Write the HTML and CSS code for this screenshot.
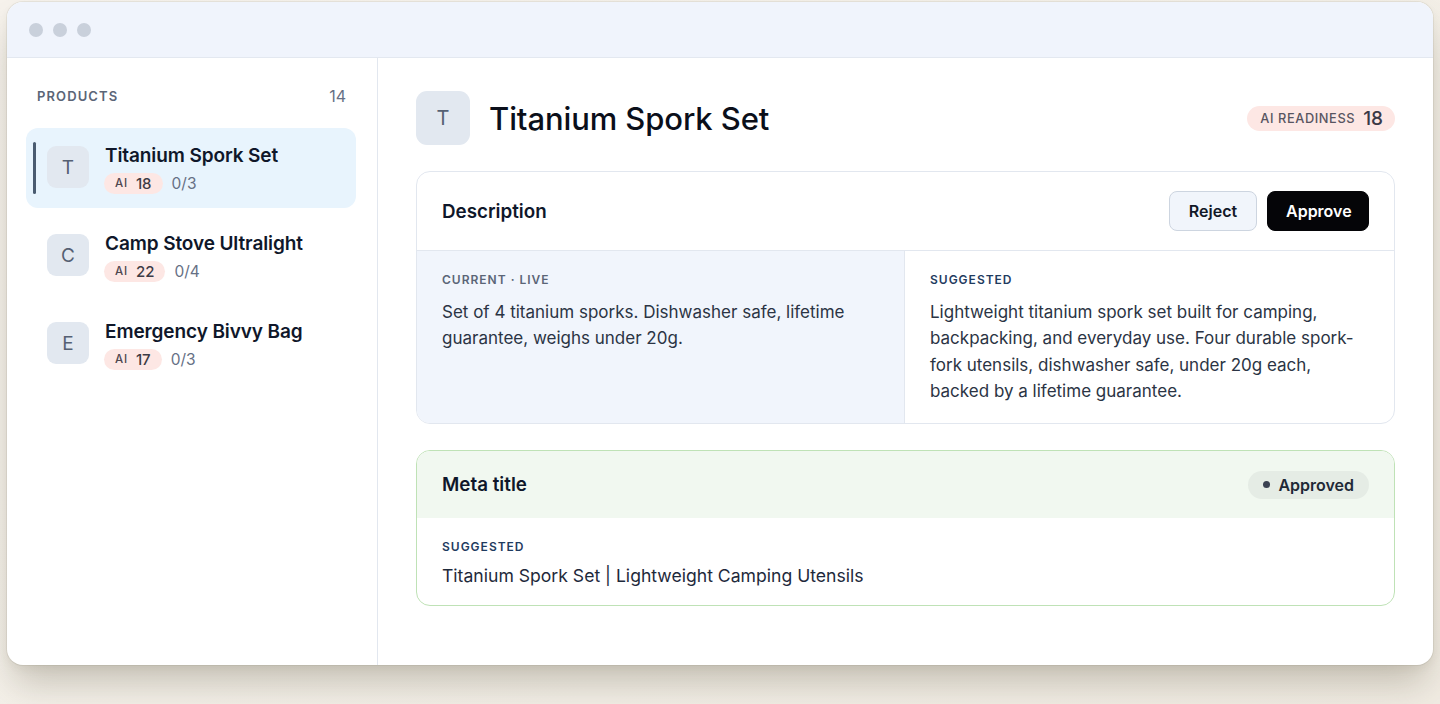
FILE: index.html
```html
<!DOCTYPE html>
<html lang="en">
<head>
<meta charset="utf-8">
<title>Products</title>
<link rel="stylesheet" href="styles.css">
</head>
<body>
<div class="window">
  <div class="titlebar">
    <span class="dot"></span><span class="dot"></span><span class="dot"></span>
  </div>
  <div class="app">
    <aside class="sidebar">
      <div class="side-head">
        <span class="side-title">PRODUCTS</span>
        <span class="side-count">14</span>
      </div>
      <ul class="list">
        <li class="item active">
          <div class="avatar">T</div>
          <div class="item-info">
            <div class="item-name">Titanium Spork Set</div>
            <div class="item-meta"><span class="ai"><span class="ai-l">AI</span><span class="ai-n">18</span></span><span class="frac">0/3</span></div>
          </div>
        </li>
        <li class="item">
          <div class="avatar">C</div>
          <div class="item-info">
            <div class="item-name">Camp Stove Ultralight</div>
            <div class="item-meta"><span class="ai"><span class="ai-l">AI</span><span class="ai-n">22</span></span><span class="frac">0/4</span></div>
          </div>
        </li>
        <li class="item">
          <div class="avatar">E</div>
          <div class="item-info">
            <div class="item-name">Emergency Bivvy Bag</div>
            <div class="item-meta"><span class="ai"><span class="ai-l">AI</span><span class="ai-n">17</span></span><span class="frac">0/3</span></div>
          </div>
        </li>
      </ul>
    </aside>
    <main class="main">
      <div class="head">
        <div class="head-avatar">T</div>
        <h1 class="title">Titanium Spork Set</h1>
        <span class="readiness"><span class="r-l">AI READINESS</span><span class="r-n">18</span></span>
      </div>

      <section class="card">
        <div class="card-head">
          <h2 class="card-title">Description</h2>
          <div class="actions">
            <button class="btn btn-reject">Reject</button>
            <button class="btn btn-approve">Approve</button>
          </div>
        </div>
        <div class="cols">
          <div class="col col-current">
            <div class="label">CURRENT · LIVE</div>
            <p class="text">Set of 4 titanium sporks. Dishwasher safe, lifetime guarantee, weighs under 20g.</p>
          </div>
          <div class="col col-suggested">
            <div class="label label-blue">SUGGESTED</div>
            <p class="text">Lightweight titanium spork set built for camping, backpacking, and everyday use. Four durable spork-fork utensils, dishwasher safe, under 20g each, backed by a lifetime guarantee.</p>
          </div>
        </div>
      </section>

      <section class="card card-ok">
        <div class="card-head card-head-ok">
          <h2 class="card-title">Meta title</h2>
          <span class="pill"><span class="pill-dot"></span>Approved</span>
        </div>
        <div class="meta-body">
          <div class="label label-blue">SUGGESTED</div>
          <p class="meta-text">Titanium Spork Set | Lightweight Camping Utensils</p>
        </div>
      </section>
    </main>
  </div>
</div>
</body>
</html>
```

FILE: styles.css
```css
* { box-sizing: border-box; }
html, body { margin: 0; padding: 0; }
body {
  width: 1440px;
  height: 704px;
  overflow: hidden;
  background: linear-gradient(135deg, #f6f2ec 0%, #f3efe7 60%, #f1ece3 100%);
  font-family: Inter, "Noto Sans", sans-serif;
  color: #0f172a;
  padding: 2px 7px 0 7px;
}
.window {
  width: 1426px;
  height: 663px;
  background: #fff;
  border-radius: 16px;
  box-shadow: 0 0 0 1px rgba(60, 50, 30, 0.07), 0 24px 36px -6px rgba(70, 60, 40, 0.26), 0 4px 10px rgba(70, 60, 40, 0.06);
  overflow: hidden;
  display: flex;
  flex-direction: column;
}
.titlebar {
  height: 56px;
  flex: 0 0 56px;
  background: #f0f4fc;
  border-bottom: 1px solid #e3e8f0;
  display: flex;
  align-items: center;
  gap: 10px;
  padding-left: 22px;
}
.dot {
  width: 14px;
  height: 14px;
  border-radius: 50%;
  background: #c9d0db;
}
.app {
  flex: 1;
  display: flex;
  min-height: 0;
}
.sidebar {
  width: 371px;
  flex: 0 0 371px;
  border-right: 1px solid #e2e7ef;
  padding: 27px 21px 0 19px;
}
.side-head {
  display: flex;
  justify-content: space-between;
  align-items: center;
  padding: 0 10px 0 11px;
  height: 22px;
  margin-bottom: 21px;
}
.side-title {
  font-size: 13px;
  font-weight: 600;
  letter-spacing: 1.1px;
  color: #5b6577;
}
.side-count {
  font-size: 16px;
  color: #667085;
}
.list {
  list-style: none;
  margin: 0;
  padding: 0;
  display: flex;
  flex-direction: column;
  gap: 8px;
}
.item {
  position: relative;
  height: 80px;
  border-radius: 12px;
  display: flex;
  align-items: center;
  padding-left: 21px;
  gap: 16px;
}
.item.active { background: #e8f4fd; }
.item.active::before {
  content: "";
  position: absolute;
  left: 7px;
  top: 14px;
  bottom: 14px;
  width: 3px;
  border-radius: 2px;
  background: #4a5b70;
}
.avatar {
  width: 42px;
  height: 42px;
  border-radius: 9px;
  background: #e2e8f0;
  color: #556073;
  font-size: 19px;
  display: flex;
  align-items: center;
  justify-content: center;
  margin-top: -2px;
}
.item-info {
  display: flex;
  flex-direction: column;
  gap: 5px;
  margin-top: 1px;
}
.item-name {
  font-size: 19px;
  font-weight: 600;
  line-height: 24px;
  color: #0f172a;
  letter-spacing: -0.1px;
}
.item-meta {
  display: flex;
  align-items: center;
  gap: 9px;
  margin-left: -1px;
}
.ai {
  display: inline-flex;
  align-items: center;
  gap: 8px;
  height: 21px;
  padding: 0 11px 0 11px;
  border-radius: 11px;
  background: #fde7e4;
}
.ai-l {
  font-size: 11.5px;
  font-weight: 500;
  color: #4e4850;
  letter-spacing: 0.8px;
}
.ai-n {
  font-size: 15px;
  font-weight: 500;
  color: #3d3b45;
}
.frac {
  font-size: 15.5px;
  color: #667085;
}
.main {
  flex: 1;
  padding: 33px 38px 0 38px;
  display: flex;
  flex-direction: column;
}
.head {
  display: flex;
  align-items: center;
  height: 54px;
  margin-bottom: 26px;
}
.head-avatar {
  width: 54px;
  height: 54px;
  border-radius: 11px;
  background: #e2e8f0;
  color: #556073;
  font-size: 20px;
  display: flex;
  align-items: center;
  justify-content: center;
  margin-right: 19px;
}
.title {
  margin: 0;
  font-size: 31px;
  font-weight: 500;
  color: #0b0f1a;
  letter-spacing: -0.1px;
  flex: 1;
}
.readiness {
  display: inline-flex;
  align-items: center;
  gap: 8px;
  height: 25px;
  padding: 0 12px 0 13px;
  border-radius: 13px;
  background: #fde7e4;
}
.r-l {
  font-size: 12.8px;
  font-weight: 500;
  letter-spacing: 0.6px;
  color: #585561;
}
.r-n {
  font-size: 19px;
  font-weight: 500;
  color: #3b3946;
}
.card {
  border: 1px solid #e2e7ef;
  border-radius: 14px;
  overflow: hidden;
  margin-bottom: 26px;
}
.card-head {
  height: 79px;
  display: flex;
  align-items: center;
  justify-content: space-between;
  padding: 0 25px;
  border-bottom: 1px solid #e2e7ef;
}
.card-title {
  margin: 0;
  font-size: 18.8px;
  font-weight: 600;
  color: #0f172a;
}
.actions {
  display: flex;
  gap: 10px;
}
.btn {
  height: 40px;
  border-radius: 8px;
  font-family: Inter, "Noto Sans", sans-serif;
  font-size: 16px;
  font-weight: 600;
  padding: 0 18px;
  cursor: pointer;
}
.btn-reject {
  background: #f1f5fb;
  border: 1px solid #cdd5e0;
  color: #111827;
  width: 88px;
}
.btn-approve {
  background: #050508;
  border: 1px solid #050508;
  color: #fff;
  width: 102px;
}
.cols {
  display: flex;
}
.col {
  flex: 1;
  padding: 21px 25px 19px 25px;
}
.col-current {
  background: #f1f5fc;
  border-right: 1px solid #e2e7ef;
  flex: 0 0 488px;
}
.label {
  font-size: 12px;
  line-height: 16px;
  font-weight: 600;
  letter-spacing: 1px;
  color: #5b6577;
}
.label-blue { color: #1f3b60; }
.text {
  margin: 11px 0 0 0;
  font-size: 17px;
  line-height: 26.3px;
  color: #2b3444;
}
.card-ok {
  border-color: #bfe2b6;
}
.card-head-ok {
  height: 67px;
  background: #f1f8f0;
  border-bottom: none;
}
.pill {
  display: inline-flex;
  align-items: center;
  gap: 8px;
  height: 28px;
  padding: 0 15px 0 15px;
  border-radius: 14px;
  background: #e5ece5;
  font-size: 16px;
  font-weight: 600;
  color: #1f2937;
}
.pill-dot {
  width: 7px;
  height: 7px;
  border-radius: 50%;
  background: #3b4252;
}
.meta-body {
  padding: 21px 25px 16px 25px;
}
.meta-text {
  margin: 8px 0 0 0;
  font-size: 17.6px;
  line-height: 26px;
  color: #1e293b;
}
```
